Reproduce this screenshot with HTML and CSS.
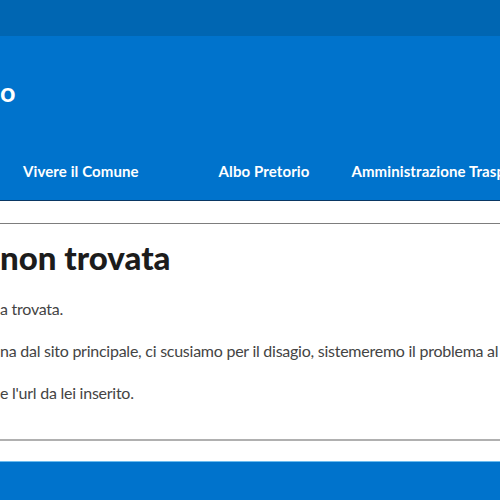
FILE: index.html
```html
<!DOCTYPE html>
<html lang="it">
<head>
    <meta charset="UTF-8">
    <meta name="viewport" content="width=device-width, initial-scale=1.0">
    <title>Pagina non trovata</title>
    <link rel="stylesheet" href="styles.css">
</head>
<body>
    <div class="slim-header"></div>
    <header class="site-header">
        <div class="brand">o</div>
        <nav class="main-nav">
            <a href="#" class="nav-item nav-first">Vivere il Comune</a>
            <a href="#" class="nav-item">Albo Pretorio</a>
            <a href="#" class="nav-item">Amministrazione Trasparente</a>
        </nav>
    </header>

    <main class="content">
        <div class="content-inner">
            <h1>non trovata</h1>
            <p>a trovata.</p>
            <p>na dal sito principale, ci scusiamo per il disagio, sistemeremo il problema al più presto.</p>
            <p>e l'url da lei inserito.</p>
        </div>
    </main>

    <footer class="site-footer"></footer>
</body>
</html>
```

FILE: styles.css
```css
body {
    font-family: Lato, "Liberation Sans", sans-serif;
    margin: 0;
    padding: 0;
    background-color: #fff;
    color: #444;
    overflow: hidden;
    white-space: nowrap;
}
.slim-header {
    height: 36px;
    background-color: #0066b2;
}
.site-header {
    background-color: #0073cc;
    padding: 39px 0 17px;
    border-bottom: 1px solid #0a3763;
    color: #fff;
}
.brand {
    font-size: 27px;
    font-weight: bold;
    line-height: 34px;
}
.main-nav {
    display: flex;
    margin-top: 50px;
    height: 24px;
}
.nav-item {
    color: #fff;
    text-decoration: none;
    font-size: 15px;
    font-weight: bold;
    letter-spacing: 0.1px;
    line-height: 24px;
    margin-right: 42px;
}
.nav-first {
    margin-left: 23px;
    margin-right: 80px;
}
.content {
    padding-top: 22px;
}
.content-inner {
    border-top: 1px solid #7d7d7d;
    border-bottom: 2px solid #b0b0b0;
    padding: 11px 0 34px;
    margin-bottom: 20px;
}
h1 {
    font-size: 33px;
    line-height: 44px;
    font-weight: 900;
    color: #1c1c1c;
    margin: 0 0 18px;
}
p {
    font-size: 16px;
    line-height: 24px;
    letter-spacing: -0.25px;
    margin: 0 0 18px;
}
p:last-child {
    margin-bottom: 0;
}
.site-footer {
    height: 60px;
    background-color: #0073cc;
    border-top: 1px solid #6cbcef;
}
```
